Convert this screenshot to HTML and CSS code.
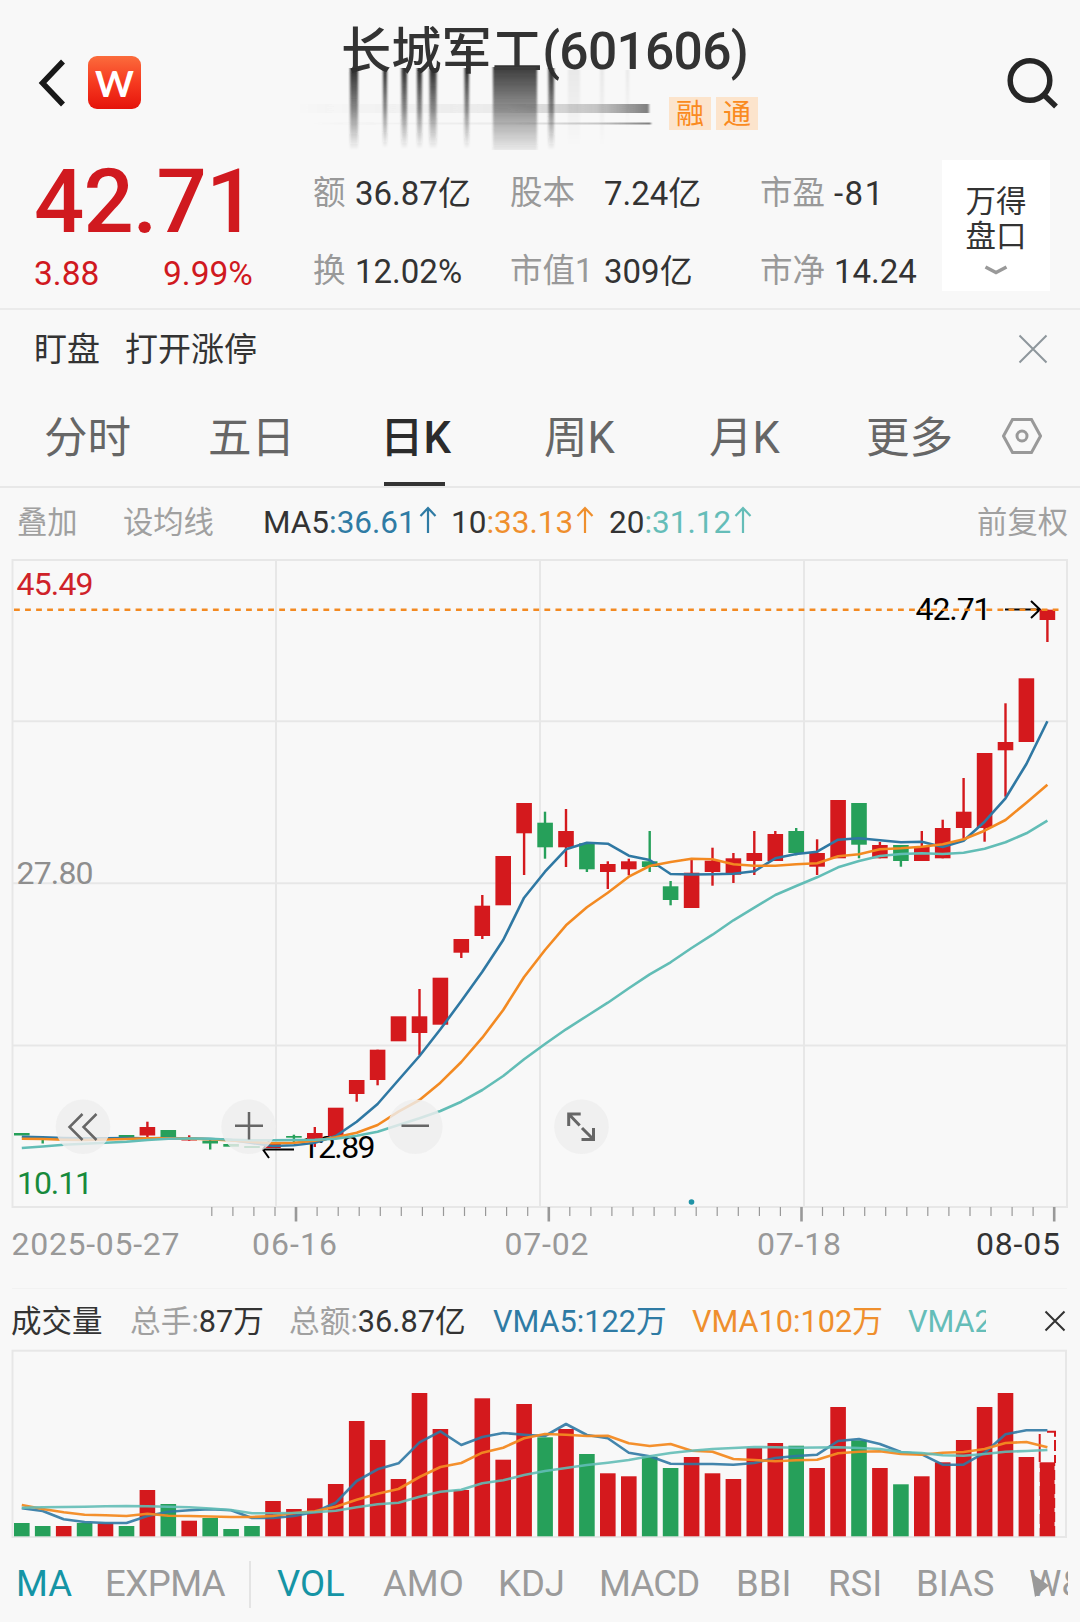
FILE: index.html
```html
<!DOCTYPE html>
<html lang="zh-CN">
<head>
<meta charset="utf-8">
<title>长城军工(601606)</title>
<link rel="stylesheet" href="styles.css">
</head>
<body>
<main class="app">
  <header class="header">
    <svg class="back" viewBox="0 0 30 50"><path d="M27 3.5 6.500 25 27 46.500" /></svg>
    <div class="logo">W</div>
    <div class="heading">
      <h1 class="title">长城军工<span class="code">(601606)</span></h1>
      <div class="tags"><span class="tag">融</span><span class="tag">通</span></div>
      <svg class="smear" viewBox="290 66 380 86">
        <defs>
          <linearGradient id="fall" x1="0" y1="0" x2="0" y2="1"><stop offset="0" stop-color="#2e2e2e"/><stop offset=".5" stop-color="#2e2e2e" stop-opacity=".55"/><stop offset="1" stop-color="#2e2e2e" stop-opacity="0"/></linearGradient>
          <linearGradient id="block" x1="0" y1="0" x2="0" y2="1"><stop offset="0" stop-color="#3c3c3c"/><stop offset=".5" stop-color="#3c3c3c" stop-opacity=".55"/><stop offset="1" stop-color="#3c3c3c" stop-opacity=".08"/></linearGradient>
          <linearGradient id="side" x1="0" y1="0" x2="1" y2="0"><stop offset="0" stop-color="#666" stop-opacity="0"/><stop offset=".6" stop-color="#666" stop-opacity=".1"/><stop offset=".85" stop-color="#666" stop-opacity=".35"/><stop offset="1" stop-color="#555" stop-opacity=".75"/></linearGradient>
          <filter id="soft"><feGaussianBlur stdDeviation="1 0.6"/></filter>
        </defs>
        <g filter="url(#soft)">
          <rect x="296" y="104" width="353" height="9" fill="url(#side)"/>
          <rect x="310" y="122.500" width="341" height="2" fill="url(#side)"/>
          <g fill="url(#fall)">
            <rect x="350" y="68" width="8" height="82"/><rect x="383" y="68" width="4" height="80"/>
            <rect x="401.500" y="68" width="5.500" height="81"/><rect x="417" y="68" width="5" height="81"/>
            <rect x="429.500" y="68" width="7" height="81"/><rect x="464.500" y="68" width="4.500" height="81"/>
            <rect x="548.500" y="68" width="5.500" height="82"/>
          </g>
          <rect x="493" y="67" width="44" height="83" fill="url(#block)"/>
          <g fill="url(#fall)" opacity=".06"><rect x="568" y="70" width="12" height="78"/><rect x="600" y="70" width="4" height="78"/><rect x="626" y="70" width="3" height="60"/></g>
        </g>
      </svg>
    </div>
    <svg class="search" viewBox="0 0 56 56"><circle cx="24" cy="24.500" r="19.800"/><path d="m38 39 12 11.500"/></svg>
  </header>

  <section class="quote">
    <div class="price">
      <div class="last">42.71</div>
      <div class="change"><span>3.88</span><span>9.99%</span></div>
    </div>
    <dl class="stats">
      <dt>额</dt><dd>36.87亿</dd><dt>股本</dt><dd>7.24亿</dd><dt>市盈</dt><dd class="loss">-81</dd>
      <dt>换</dt><dd>12.02%</dd><dt>市值1</dt><dd>309亿</dd><dt>市净</dt><dd>14.24</dd>
    </dl>
    <div class="depth">万得<br>盘口<svg class="caret" viewBox="0 0 24 10"><path d="M1.500 2 12 7.500 22.500 2"/></svg></div>
  </section>

  <section class="notice">
    <b>盯盘</b><span>打开涨停</span>
    <svg class="close" viewBox="0 0 30 30"><path d="m1.500 1.500 27 27M28.500 1.500l-27 27"/></svg>
  </section>

  <nav class="periods">
    <span>分时</span><span>五日</span><span class="on">日K</span><span>周K</span><span>月K</span><span>更多</span>
    <svg class="gear" viewBox="0 0 40 38"><path d="M1.500 19 10.500 2.500h19L38.500 19l-9 16.500h-19z"/><circle cx="20" cy="19" r="5"/></svg>
  </nav>

  <div class="averages">
    <span class="overlay">叠加</span><span class="setma">设均线</span>
    <span class="ma ma5">MA5<i>:36.61</i><svg viewBox="0 0 18 28"><path d="M9 27V2M1.500 10 9 2l7.500 8"/></svg></span>
    <span class="ma ma10">10<i>:33.13</i><svg viewBox="0 0 18 28"><path d="M9 27V2M1.500 10 9 2l7.500 8"/></svg></span>
    <span class="ma ma20">20<i>:31.12</i><svg viewBox="0 0 18 28"><path d="M9 27V2M1.500 10 9 2l7.500 8"/></svg></span>
    <span class="adjust">前复权</span>
  </div>

  <svg class="kline" id="kline" viewBox="0 558 1080 731"></svg>

  <div class="volhead">
    <span class="name">成交量</span>
    <span class="hands"><em>总手:</em>87万</span>
    <span class="amount"><em>总额:</em>36.87亿</span>
    <span class="v5">VMA5:122万</span><span class="v10">VMA10:102万</span><span class="v20">VMA2</span>
    <svg class="shut" viewBox="0 0 22 22"><path d="m1.500 1.500 19 19M20.500 1.500l-19 19"/></svg>
  </div>

  <svg class="volume" id="volume" viewBox="0 1349 1080 191"></svg>

  <nav class="indicators">
    <span class="i-ma on">MA</span><span class="i-expma">EXPMA</span><span class="i-vol on">VOL</span><span class="i-amo">AMO</span><span class="i-kdj">KDJ</span><span class="i-macd">MACD</span><span class="i-bbi">BBI</span><span class="i-rsi">RSI</span><span class="i-bias">BIAS</span><span class="i-ws">W&amp;<svg class="more" viewBox="0 0 18 24"><path d="M0 0 18 12.500 4 24z"/></svg></span>
  </nav>
</main>
<script src="charts.js"></script>
</body>
</html>
```
FILE: styles.css
```css
* { box-sizing: border-box; }
body {
  margin: 0;
  background: #f8f8f8;
  color: #333;
  font-family: Roboto, "Noto Sans CJK SC", sans-serif;
}
.app { width: 1080px; height: 1622px; overflow: hidden; display: flex; flex-direction: column; white-space: nowrap; }
svg { fill: none; flex: none; display: block; }

.header { height: 152px; display: flex; flex: none; padding-left: 36px; }
.back { width: 30px; height: 50px; margin-top: 58px; stroke: #181818; stroke-width: 5.5; }
.logo {
  width: 53px; height: 53px; margin: 56px 0 0 22px; border-radius: 9px;
  background: linear-gradient(#fb6c3c, #f63a20 50%, #e5140b);
  color: #fff; font: 700 37px/53px Lato, sans-serif; text-align: center;
}
.heading { position: relative; width: 529px; margin-left: 149px; padding-left: 51px; }
.title { margin: 0; padding-top: 15px; font-size: 50.3px; line-height: 73px; font-weight: 500; }
.code { font-size: 51.500px; letter-spacing: -.7px; }
.tags { display: flex; gap: 5px; margin: 9px 0 0 328px; }
.tag { width: 42px; height: 33px; background: #fce4cc; color: #fa8a20; font-size: 28px; line-height: 36px; text-align: center; }
.smear { position: absolute; left: 0; top: 66px; width: 380px; height: 86px; }
.search { width: 56px; height: 56px; margin: 56px 0 0 187px; stroke: #262626; stroke-width: 5.5; }

.quote { height: 158px; flex: none; display: flex; border-bottom: 2px solid #ebebeb; }
.price { width: 313px; padding: 2px 0 0 34px; color: #d0191f; }
.last { font-size: 88.500px; line-height: 97px; font-weight: 500; letter-spacing: -.9px; }
.change { display: flex; font-size: 33.500px; line-height: 46px; }
.change span:first-child { width: 129px; }
.stats { margin: 0; display: grid; grid-template-columns: 42px 155px 94px 156px 74px 108px; grid-template-rows: 78px 78px; font-size: 33px; line-height: 83px; }
.stats dt { color: #999; font-size: 32.500px; }
.stats dd { margin: 0; }
.stats .loss { letter-spacing: 1.500px; }
.depth { width: 108px; height: 131px; margin-top: 8px; padding-top: 24px; background: #fff; font-size: 30.500px; line-height: 35px; text-align: center; }
.caret { width: 24px; height: 10px; margin: 11px auto 0; stroke: #999; stroke-width: 3.500; }

.notice { height: 80px; flex: none; display: flex; align-items: center; padding: 0 32px 2px 34px; font-size: 33px; line-height: 40px; }
.notice b { font-weight: 400; width: 91px; }
.notice b, .notice span { padding-top: 1px; }
.close { width: 30px; height: 30px; margin-left: auto; stroke: #8e979c; stroke-width: 2; }

.periods { height: 98px; flex: none; display: grid; grid-template-columns: 164px 172px 164px 165px 157px 135px 1fr; grid-template-rows: 96px; padding-left: 44px; border-bottom: 2px solid #e8e8e8; font-size: 43.500px; line-height: 97px; color: #666; }
.periods .on { color: #2b2b2b; font-weight: 500; position: relative; }
.periods .on::after { content: ""; position: absolute; left: 4px; bottom: 0; width: 61px; height: 4px; background: #333; }
.gear { width: 40px; height: 38px; margin-top: 27px; margin-left: 1px; stroke: #999; stroke-width: 3; }

.averages { height: 70px; flex: none; display: flex; padding-left: 17px; font-size: 31.500px; line-height: 69px; }
.averages i { font-style: normal; }
.overlay, .setma, .adjust { color: #a0a0a0; font-size: 30.300px; }
.overlay { width: 106px; }
.setma { width: 140px; }
.ma { display: flex; }
.ma svg { width: 18px; height: 28px; margin: 18px 0 0 3px; stroke-width: 2.200; }
.ma5 { width: 188px; } .ma5 i { color: #2f7ba4; } .ma5 svg { stroke: #2f7ba4; }
.ma10 { width: 158px; } .ma10 i { color: #ef8f2d; } .ma10 svg { stroke: #ef8f2d; }
.ma20 i { color: #65bdb8; } .ma20 svg { stroke: #65bdb8; }
.adjust { margin: 0 12px 0 auto; }

.kline { width: 1080px; height: 731px; }
.kline text { font-size: 32px; }
.volume { width: 1080px; height: 191px; }

.volhead { height: 60px; flex: none; display: flex; padding-left: 11px; font-size: 30.700px; line-height: 65px; }
.volhead em { font-style: normal; color: #a0a0a0; }
.name { width: 119px; font-size: 30.500px; }
.hands { width: 159px; }
.amount { width: 204px; }
.v5 { width: 199px; color: #2f7ba4; }
.v10 { width: 216px; color: #ef8f2d; }
.v20 { width: 78px; overflow: hidden; color: #65bdb8; }
.shut { width: 22px; height: 22px; margin: 21px 0 0 58px; stroke: #333; stroke-width: 2; }

.indicators { height: 82px; flex: none; display: flex; width: 1068px; overflow: hidden; padding-left: 16px; font-size: 36.500px; line-height: 87px; color: #9b9b9b; }
.indicators span { flex: none; }
.indicators .on { color: #1594a5; }
.i-ma { width: 89px; }
.i-expma { width: 146px; height: 47px; margin-top: 21px; line-height: 45px; border-right: 2px solid #e4e4e4; letter-spacing: -.5px; }
.i-vol { width: 106px; margin-left: 26px; }
.i-amo { width: 115px; }
.i-kdj { width: 101px; }
.i-macd { width: 137px; letter-spacing: -.8px; }
.i-bbi { width: 92px; }
.i-rsi { width: 88px; }
.i-bias { width: 113px; }
.i-ws { position: relative; }
.more { position: absolute; left: 2px; top: 33px; width: 18px; height: 24px; fill: #999; }
```
FILE: charts.js
```js
const RED = '#d4191d', GREEN = '#26a05a';
const BLUE = '#2f78a3', ORANGE = '#f38a22', TEAL = '#62bdb6';
const x = i => 21.8 + 20.93 * i;

// [colour, body top, body bottom, wick top, wick bottom]
const candles = [
  ['g',1133,1135.5],['g',1137,1139,1137,1143.5],['r',1138,1140],['g',1138,1140],['r',1137,1139],['g',1135,1137.7],
  ['r',1127,1135.5,1121.7,1137.5],['g',1130,1138.7],['r',1138.5,1140.5,1135.3,1140.7],['g',1140.7,1143.5,1140,1149.5],
  ['g',1144,1146.7],['g',1146,1148],['r',1144,1148],['g',1136,1137.7,1134.7,1143.3],['r',1133,1139.3,1127,1147],
  ['r',1107.7,1136],['r',1080,1094,1080,1101.7],['r',1049.7,1080,1049.7,1085.3],['r',1016.3,1041.3],
  ['r',1016.3,1033,989,1055],['r',977.7,1024.7],['r',939,952.7,939,958],['r',905.7,936,895,939],['r',856,905.3],
  ['r',803,833.3,803,875],['g',822.7,847.3,811.7,858.7],['r',831,847.3,809,867],['g',843.3,869.3,843.3,872],
  ['r',864,872,861.3,889],['r',861.3,869.3,858.7,875.3],['g',861.3,867,831,872],['g',886.3,900,881,905.3],
  ['r',872.7,908,858.7,908],['r',860.7,872,847.7,885.7],['r',858.3,874.7,853,883],['r',853,861,831,875],
  ['r',834,861,831,861],['g',831,853,828,855.3],['r',853,866.7,839.3,875],['r',800,858.3],['g',803,844.7,803,858.3],
  ['r',845,858.3,842,858.3],['g',845,861,845,866.7],['r',846.3,861,831,861],['r',828,858.3,819.7,858.3],
  ['r',811.7,828,778,839.3],['r',753,828,753,841.7],['r',742,750.3,703.3,796.7],['r',678.3,742],['r',609.7,620,609.7,642]
];
const ma5 = [1136.7,1137.3,1138,1138.3,1138.3,1138,1138.3,1138,1138.5,1139,1140,1143,1146,1145.3,1142.7,1136,1121.7,1104,1080,1056,1029.3,1001,971.7,940,897.7,871.7,849.3,842.7,843.7,855.7,860,874,874.5,874.3,873.7,871.3,858.3,854,851.7,839.7,838.3,840.3,842.3,841.7,847,840.7,821.7,798.3,764,721.3];
const ma10 = [1138.7,1139,1139.7,1140,1139.5,1139,1138.3,1138.3,1138.6,1139.3,1140.5,1142,1143.3,1142.7,1140.7,1137.3,1132.7,1125,1111.7,1100,1082.7,1062,1037.7,1010,977,950,925.3,907.3,892.7,876.7,866,862,858.7,859.3,864.3,865.7,865.7,864.3,863.3,856.3,854.3,849.3,848.3,846.7,844.3,839.3,830.7,820,802.7,784.7];
const ma20 = [1148,1146.5,1144.7,1143.7,1142.7,1141.7,1140,1138.7,1138.5,1138.7,1139.7,1140.3,1140.3,1140,1139.7,1138.7,1135.7,1131.7,1125,1118.3,1111,1101.7,1090,1076,1059.3,1044,1029.3,1016,1002.7,988.3,974.3,962.3,948,934.7,920.3,907.7,895,886,877.3,867.3,861,856,854,853.3,854,852.7,848.7,842.3,833.3,820.7];

const line = (ys, colour, alpha = 1) =>
  `<polyline points="${ys.map((y, i) => x(i).toFixed(1) + ',' + y).join(' ')}" stroke="${colour}" stroke-width="2.6" stroke-linejoin="round" opacity="${alpha}"/>`;
const rect = (l, t, w, h, fill) => `<rect x="${l.toFixed(1)}" y="${t}" width="${w}" height="${h.toFixed(1)}" fill="${fill}"/>`;
const text = (l, y, w, fill, s) => `<text x="${l}" y="${y}" textLength="${w}" fill="${fill}">${s}</text>`;

let k = '<g stroke="#e7e7e7" stroke-width="2"><rect x="12.5" y="560" width="1054.5" height="647"/>' +
  '<path d="M276 560v647M540 560v647M804 560v647M12 721.3h1055M12 883.3h1055M12 1045.5h1055"/></g>';
k += text(16.5, 595.3, 77, '#cf2229', '45.49') + text(16.5, 884, 77, '#8e8e8e', '27.80') + text(17, 1194, 76, '#178a3c', '10.11');
k += text(915.5, 620, 76, '#000', '42.71') + '<path d="M1005 609.5h34M1031 601l9 8.500-9 8.500" stroke="#000" stroke-width="2"/>';
k += text(301.5, 1158.2, 74, '#000', '12.89') + '<path d="M263 1149.500h31M269 1141l-6 8.500 6 8.500" stroke="#000" stroke-width="2"/>';
candles.forEach(([c, t, b, wt, wb], i) => {
  const fill = c === 'r' ? RED : GREEN;
  if (wt) k += rect(x(i) - 1.200, wt, 2.400, wb - wt, fill);
  k += rect(x(i) - 7.800, t, 15.600, b - t, fill);
});
k += line(ma5, BLUE) + line(ma10, ORANGE) + line(ma20, TEAL);
k += `<path d="M14 609.700h1047" stroke="${ORANGE}" stroke-width="2.400" stroke-dasharray="5.800 5.250"/>`;
k += '<circle cx="691.5" cy="1202" r="2.800" fill="#1f93a6"/>';

[83, 248.6, 415.3, 581.5].forEach(cx => { k += `<circle cx="${cx}" cy="1126.7" r="27.3" fill="#eeeeee" fill-opacity=".82"/>`; });
k += '<g stroke="#666" stroke-width="2.500"><path d="M82.500 1114 69.500 1127l13 13M96.500 1114l-13 13 13 13"/>' +
  '<path d="M235 1125.700h28M249 1112v27.500M401.500 1125.700h27.500"/>' +
  '<path d="M568.700 1126v-12h12M568.700 1114l11 11.500M593.500 1128v11.500h-12M593.500 1139.500l-11.500-11.500" stroke-width="3"/></g>';

for (let i = 0; i <= 40; i++) {
  const big = i % 12 === 4, tx = 211.8 + 21.06 * i;
  k += rect(tx - (big ? 1.300 : .6), 1207, big ? 2.600 : 1.200, big ? 14.500 : 9, '#999');
}
k += text(11.5, 1255.3, 168, '#999', '2025-05-27') + text(252, 1255.3, 85, '#999', '06-16') + text(504.500, 1255.3, 84, '#999', '07-02') +
  text(757, 1255.3, 84, '#999', '07-18') + text(976, 1255.3, 84, '#333', '08-05');
k += rect(12, 1288.5, 1055, 1.500, '#ededed');
document.getElementById('kline').innerHTML = k;

const volTop = [1523,1526,1526,1523,1523.5,1526,1490,1504,1520.7,1518,1529,1526,1501,1509,1498.3,1484,1421,1440,1479,1393,1429,1490,1398.3,1459.7,1404,1437.3,1429,1454,1473.3,1476.3,1456.7,1468,1457,1473.3,1479,1448,1443,1445.7,1468,1407,1440.3,1468,1484.3,1476.3,1462.3,1440,1407,1393,1457,1462.3];
const volGreen = [0,1,3,5,7,9,10,11,25,27,30,31,37,40,42];
const vma5 = [1508.3,1511,1519.3,1522,1523,1523,1516,1511.7,1510.3,1509.3,1510.3,1518,1518,1516,1512,1502.7,1481,1469.3,1463.3,1442.3,1431.3,1445,1437,1433,1434.7,1436,1424,1435,1438.3,1452.7,1456.3,1463.7,1464,1464,1464.7,1463,1458,1456,1454.7,1441,1439,1444,1452,1454.3,1464.7,1464.7,1452.7,1434.3,1430.3,1430.3];
const vma10 = [1505,1509,1512.3,1514.7,1515.3,1516,1513.7,1515.7,1516,1516.5,1517,1517,1516,1513,1511.3,1506.7,1499.7,1493.7,1489,1477,1467,1463,1452.7,1447.7,1438.3,1434,1434.7,1436,1435.7,1443.3,1446,1444,1450.7,1451.7,1459,1460,1461.3,1460.3,1459.7,1453.3,1451.7,1451.3,1454,1454.7,1452.7,1452,1449,1443,1442,1447.3];
const vma20 = [1507.7,1507.3,1507,1506.7,1506.3,1506,1506.3,1506.7,1507.3,1508.5,1510,1513.3,1513.3,1513,1512.3,1510.7,1507.3,1504.3,1502.7,1496.7,1491.7,1489.7,1483.3,1480.3,1475,1471,1468,1465,1462.7,1460,1456.3,1453,1450.7,1449,1448,1447,1447.3,1447.7,1447.5,1447.3,1448,1449,1452,1453,1455.3,1455.7,1454,1451.7,1451,1450];

let v = '<rect x="12.500" y="1350.700" width="1053.500" height="186.300" stroke="#e7e7e7" stroke-width="2"/>';
volTop.forEach((t, i) => {
  v += rect(x(i) - 7.800, t, 15.600, 1536.3 - t, volGreen.includes(i) ? GREEN : RED);
});
// Projected full-day volume: dashed frame around the current bar
v += `<path d="M1047 1431.700h8v5M1039.700 1434v28M1055 1440v11M1055 1455v8" stroke="${RED}" stroke-width="2"/>`;
v += '<path d="M1039 1468v67M1055.300 1466v69" stroke="#f8f8f8" stroke-width="1.500" stroke-dasharray="4 10"/>';
v += line(vma5, BLUE, .9) + line(vma10, ORANGE, .95) + line(vma20, TEAL, .9);
document.getElementById('volume').innerHTML = v;
```
